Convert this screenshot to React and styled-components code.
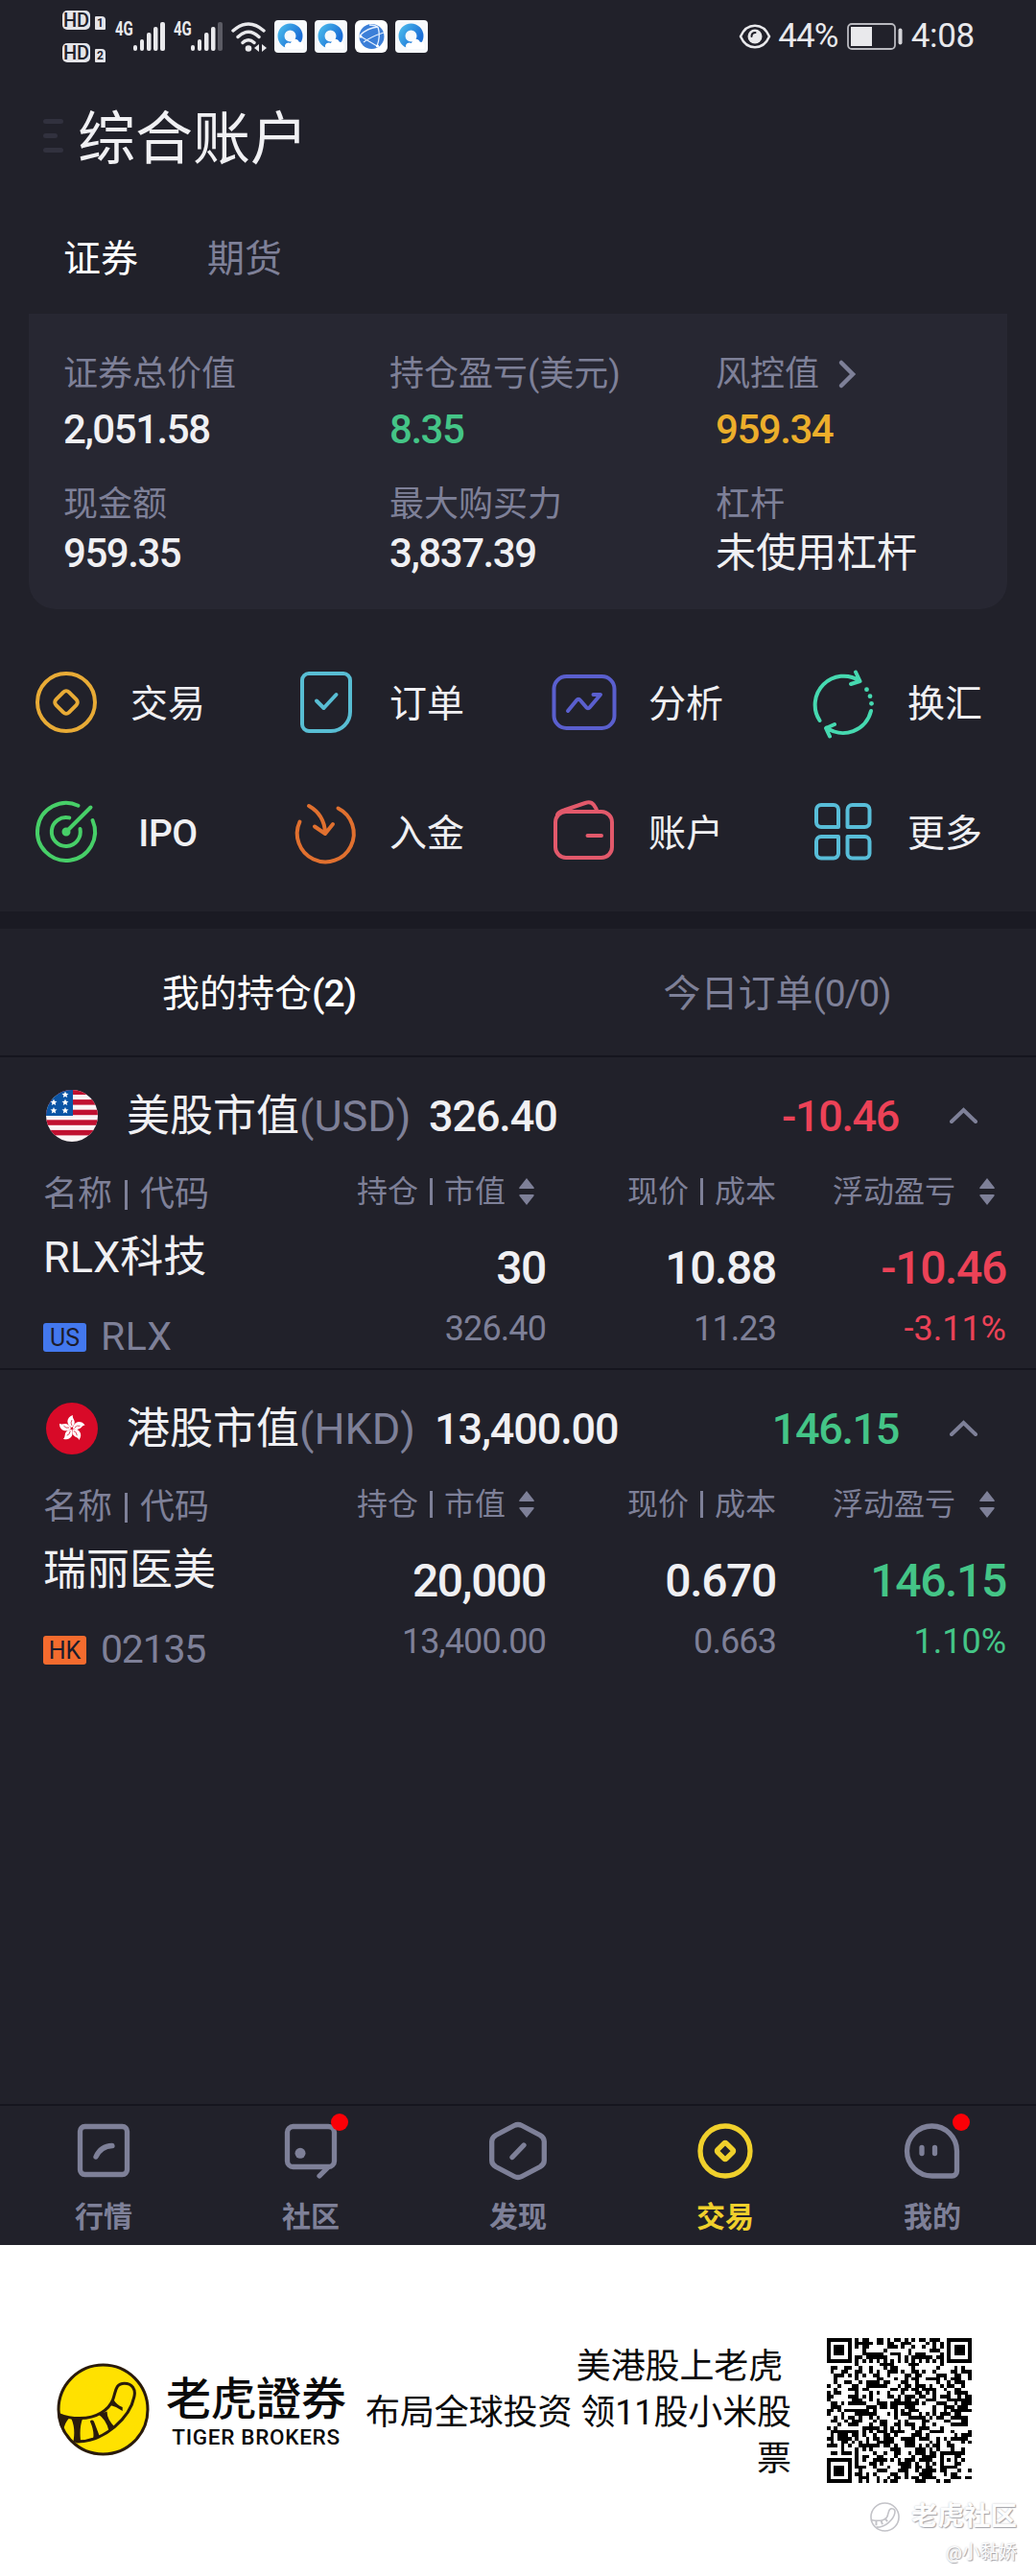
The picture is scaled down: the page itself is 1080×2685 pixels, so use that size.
import styled, { createGlobalStyle } from "styled-components";

const c = {
  bg: "#21212a",
  card: "#272732",
  band: "#1a1a23",
  line: "#15151e",
  text: "#f0f0f3",
  muted: "#7e8098",
  green: "#44c587",
  red: "#ec4257",
  amber: "#ecae2b",
  yellow: "#f0d02c",
};

const GlobalStyle = createGlobalStyle`
  * {
    box-sizing: border-box;
  }

  body {
    margin: 0;
    background: #fff;
    color: ${c.text};
    font-family: Roboto, "Noto Sans CJK SC", sans-serif;
  }

  svg {
    display: block;
    flex: none;
    overflow: visible;
  }
`;

const Screen = styled.div`
  width: 1080px;
  height: 2685px;
  display: flex;
  flex-direction: column;
  overflow: hidden;
  white-space: nowrap;
`;

const AppBody = styled.main`
  height: 2340px;
  display: flex;
  flex-direction: column;
  background: ${c.bg};
`;

/* ---------- status bar ---------- */

const StatusBar = styled.div`
  height: 76px;
  padding: 0 64px 0 65px;
  display: flex;
  align-items: center;
  justify-content: space-between;
  color: #e9e9ec;
`;

const StatusSide = styled.div`
  display: flex;
  align-items: center;
  gap: ${({ $gap }) => $gap}px;
`;

const HdStack = styled.div`
  display: grid;
  gap: 14px;
  margin-right: 2px;
`;

const HdRow = styled.div`
  display: flex;
  align-items: flex-end;
  gap: 5px;
`;

const HdBadge = styled.span`
  width: 29px;
  height: 20px;
  border-radius: 5px;
  background: #e4e4e8;
  color: ${c.bg};
  font: 500 20px/21px Roboto, sans-serif;
  text-align: center;
`;

const SimBadge = styled.span`
  width: 11px;
  height: 14px;
  border-radius: 1px 4px 1px 1px;
  background: #e4e4e8;
  color: ${c.bg};
  font: 700 12px/15px Roboto, sans-serif;
  text-align: center;
`;

const Network = styled.div`
  height: 31px;
  width: ${({ $width }) => $width}px;
  display: flex;
  align-items: flex-start;
  justify-content: space-between;
`;

const NetworkType = styled.span`
  width: 18px;
  font: 700 20px/15px Roboto, sans-serif;
  transform: scaleX(0.75);
  transform-origin: left;
`;

const StatusText = styled.span`
  font-size: 35px;
  line-height: 40px;
  letter-spacing: ${({ $spacing }) => $spacing || 0}px;
`;

/* ---------- header ---------- */

const Header = styled.header`
  height: 134px;
  padding-left: 45px;
  display: flex;
  align-items: center;
`;

const MenuMark = styled.div`
  width: 36px;
  margin-bottom: 4px;
  display: grid;
  gap: 10px;
`;

const MenuLine = styled.i`
  width: ${({ $short }) => ($short ? 15 : 21)}px;
  height: 5px;
  border-radius: 3px;
  background: #31313e;
`;

const Title = styled.h1`
  margin: 5px 0 0;
  font-size: 60px;
  font-weight: 400;
  line-height: 70px;
`;

const AccountTabs = styled.nav`
  height: 117px;
  padding: 2px 66px 0;
  display: flex;
  align-items: center;
  gap: 72px;
`;

const AccountTab = styled.span`
  color: ${({ $active }) => ($active ? "#fff" : c.muted)};
  font-size: 39px;
  line-height: 48px;
`;

const Card = styled.section`
  height: 308px;
  margin: 0 30px;
  padding: 39px 0 0 36px;
  display: grid;
  grid-template-columns: repeat(3, 340px);
  grid-template-rows: 136px 120px;
  border-radius: 0 0 28px 28px;
  background: ${c.card};
`;

const Label = styled.div`
  display: flex;
  align-items: center;
  gap: 20px;
  color: ${c.muted};
  font-size: 36px;
  line-height: 48px;
`;

const Value = styled.div`
  margin-top: ${({ $row }) => ($row ? 3 : 10)}px;
  color: ${({ $color }) => $color || c.text};
  font-size: 42px;
  font-weight: ${({ $cjk }) => ($cjk ? 400 : 500)};
  line-height: 48px;
  letter-spacing: ${({ $cjk }) => ($cjk ? 0 : "-0.035em")};
`;

/* ---------- shortcuts ---------- */

const Shortcuts = styled.section`
  height: 315px;
  padding-top: 29px;
  display: grid;
  grid-template-columns: repeat(4, 270px);
  grid-auto-rows: 135px;
`;

const Shortcut = styled.div`
  padding-left: 33px;
  display: flex;
  align-items: center;
  gap: 31px;
`;

const ShortcutLabel = styled.span`
  min-width: 78px;
  margin-top: 4px;
  font-size: 39px;
  line-height: 48px;
  text-align: center;
  font-weight: ${({ $latin }) => ($latin ? 500 : 400)};
  letter-spacing: ${({ $latin }) => ($latin ? "-0.5px" : 0)};
`;

const Band = styled.div`
  height: 18px;
  background: ${c.band};
`;

const ListTabs = styled.nav`
  height: 134px;
  padding-top: 4px;
  display: grid;
  grid-template-columns: 1fr 1fr;
  align-items: center;
  border-bottom: 2px solid ${c.line};
  font-size: 39px;
  line-height: 48px;
  text-align: center;
`;

const ListTab = styled.span`
  color: ${({ $active }) => ($active ? "#fff" : c.muted)};
`;

const Count = styled.span`
  font-weight: ${({ $bold }) => ($bold ? 500 : 400)};
  letter-spacing: -0.03em;
`;

/* ---------- holdings ---------- */

const Market = styled.section`
  height: 326px;
  border-bottom: ${({ $last }) => ($last ? 0 : 2)}px solid ${c.line};
`;

const MarketHead = styled.div`
  height: 121px;
  padding: 0 61px 0 48px;
  display: flex;
  align-items: center;
  font-size: 45px;
  line-height: 54px;
`;

const MarketName = styled.span`
  margin: 3px 0 0 30px;
`;

const Currency = styled.span`
  width: ${({ $width }) => $width}px;
  margin-top: 3px;
  color: ${c.muted};
`;

const MarketValue = styled.span`
  flex: 1;
  margin-top: 3px;
  font-weight: 500;
  letter-spacing: -0.025em;
`;

const MarketChange = styled.span`
  margin: 3px 53px 0 0;
  color: ${({ $color }) => $color};
  font-weight: 500;
  letter-spacing: -0.03em;
`;

const Columns = styled.div`
  height: 203px;
  padding: 0 31px 0 45px;
  display: grid;
  grid-template-columns: 264px 260px 240px 240px;
`;

const Column = styled.div`
  display: flex;
  flex-direction: column;
  align-items: ${({ $left }) => ($left ? "flex-start" : "flex-end")};
`;

const ColumnHead = styled.div`
  height: 36px;
  margin: ${({ $big }) => ($big ? 4 : 1)}px ${({ $inset }) => $inset || 0}px 0 0;
  display: flex;
  align-items: center;
  color: ${c.muted};
  font-size: ${({ $big }) => ($big ? 36 : 32)}px;
  line-height: 36px;
`;

const Divider = styled.i`
  width: 3px;
  height: ${({ $tall }) => ($tall ? 31 : 28)}px;
  margin: 0 ${({ $tall }) => ($tall ? 13 : 12)}px;
  background: ${c.muted};
`;

const SortIcon = styled.svg`
  margin-left: ${({ $gap }) => $gap}px;
`;

const StockName = styled.div`
  margin-top: 21px;
  font-size: 45px;
  line-height: 54px;
`;

const StockCode = styled.div`
  margin-top: 31px;
  display: flex;
  align-items: center;
  gap: 15px;
  color: ${c.muted};
  font-size: 41px;
  line-height: 48px;
  letter-spacing: ${({ $spacing }) => $spacing}px;
`;

const MarketBadge = styled.span`
  width: 45px;
  height: 30px;
  margin-top: 2px;
  border-radius: 3px;
  background: ${({ $color }) => $color};
  color: #1c1c2c;
  font-size: 25px;
  line-height: 31px;
  letter-spacing: 0;
  text-align: center;
`;

const Primary = styled.div`
  margin-top: 35px;
  color: ${({ $color }) => $color || c.text};
  font-size: 48px;
  font-weight: 500;
  line-height: 54px;
  letter-spacing: -0.028em;
`;

const Secondary = styled.div`
  margin-top: 15px;
  color: ${({ $color }) => $color || c.muted};
  font-size: 36px;
  line-height: 42px;
  letter-spacing: ${({ $color }) => ($color ? 0 : "-0.025em")};
`;

/* ---------- bottom navigation ---------- */

const BottomNav = styled.nav`
  height: 147px;
  margin-top: auto;
  display: grid;
  grid-template-columns: repeat(5, 216px);
  border-top: 2px solid ${c.line};
`;

const NavItem = styled.div`
  display: flex;
  flex-direction: column;
  align-items: center;
  padding-top: 17px;
  color: ${({ $active }) => ($active ? c.yellow : c.muted)};
  font-size: 30px;
  font-weight: 700;
  line-height: 36px;
`;

const NavIcon = styled.div`
  position: relative;
  margin-bottom: 21px;
`;

const Dot = styled.i`
  position: absolute;
  top: -9px;
  right: -9px;
  width: 18px;
  height: 18px;
  border-radius: 50%;
  background: #fb0007;
`;

/* ---------- footer ---------- */

const Footer = styled.footer`
  position: relative;
  height: 345px;
  padding: 97px 67px 0 59px;
  display: flex;
  align-items: flex-start;
  background: #fff;
  color: #0a0a0a;
`;

const Mark = styled.div`
  margin-top: 26px;
`;

const Brand = styled.div`
  width: 188px;
  margin: 33px 0 0 17px;
  display: grid;
  justify-items: center;
`;

const BrandName = styled.div`
  font: 500 47px/54px "Noto Sans CJK TC", sans-serif;
`;

const BrandLatin = styled.div`
  margin-top: 2px;
  font-size: 22.5px;
  font-weight: 500;
  line-height: 28px;
  letter-spacing: 0.7px;
`;

const Slogan = styled.p`
  flex: 1;
  margin: 6px 37px 0 0;
  font-size: 36px;
  line-height: 48px;
  letter-spacing: -0.1px;
  text-align: right;
  white-space: pre;
`;

const Watermark = styled.div`
  position: absolute;
  right: 20px;
  bottom: 12px;
  display: grid;
  justify-items: end;
  color: #fdfdfd;
  text-shadow: 1px 1px 1px #a2a2a8, 0 0 2px #c6c6ca;
`;

const WatermarkTop = styled.div`
  display: flex;
  align-items: center;
  gap: 12px;
  font-size: 27.5px;
  font-weight: 700;
  line-height: 38px;
`;

const WatermarkUser = styled.div`
  margin-top: 7px;
  font-size: 19px;
  line-height: 24px;
`;

/* ---------- icons ---------- */

function Signal({ weak }) {
  return (
    <svg width="33" height="31" fill="#e9e9ec">
      <rect x="0" y="24" width="4" height="6" rx="2" />
      <rect x="7" y="18" width="4" height="12" rx="2" />
      <rect x="14" y="11" width="4.500" height="19" rx="2" />
      <rect x="21" y="5" width="4.500" height="25" rx="2" />
      <rect x="28" y="0" width="5" height="30" rx="2" fill={weak ? "#5b5b64" : undefined} />
    </svg>
  );
}

function Wifi() {
  return (
    <svg width="37" height="31" fill="none" stroke="#e9e9ec" strokeWidth="3.400" strokeLinecap="round">
      <path d="M2 9Q18 -5 34 9M7 15.500Q18 5 29 15.500M12 21.500Q18 16 24 21.500" />
      <circle cx="18" cy="27.500" r="3.300" fill="#e9e9ec" stroke="none" />
      <path d="M29 23v8l-5-4zM32 23l5 4-5 4z" fill="#e9e9ec" stroke="none" />
    </svg>
  );
}

function CloudApp() {
  return (
    <svg width="34" height="34" viewBox="0 0 34 34">
      <defs>
        <linearGradient id="ring" x1="0" y1="0" x2="1" y2="0.6">
          <stop offset="0" stopColor="#46b4ea" />
          <stop offset="1" stopColor="#1b6fd6" />
        </linearGradient>
      </defs>
      <rect width="34" height="34" rx="4" fill="#f6f9fc" />
      <circle cx="16.500" cy="16.500" r="9.500" fill="none" stroke="url(#ring)" strokeWidth="7" />
      <path d="M12 30c-3-4 1-8 5-6 1-5 7-6 9-1 4-1 6 4 4 7z" fill="#fff" />
    </svg>
  );
}

function GlobeApp() {
  return (
    <svg width="34" height="34" viewBox="0 0 34 34">
      <rect width="34" height="34" rx="6" fill="#fff" />
      <circle cx="17.500" cy="17" r="13" fill="#3c7fd8" />
      <g fill="none" stroke="#e5f0ff" strokeWidth="1.300">
        <path d="M5 16Q13 8 24 7M24 7Q27 17 23 27M6 17l17 10M9 23Q17 17 30 13M15 5Q22 5 24 8" />
      </g>
      <circle cx="6" cy="17" r="1.600" fill="#fff" />
      <circle cx="23.500" cy="27" r="1.600" fill="#fff" />
    </svg>
  );
}

function Eye() {
  return (
    <svg width="30" height="26" viewBox="0 0 30 26" fill="none" stroke="#e9e9ec" strokeWidth="2.500">
      <path d="M0 13C6.500 -2 23.500 -2 30 13C23.500 28 6.500 28 0 13z" />
      <circle cx="15" cy="13" r="7.500" fill="#e9e9ec" stroke="none" />
      <path d="M11.500 13q0-4 4-4" stroke={c.bg} strokeWidth="2" strokeLinecap="round" />
    </svg>
  );
}

function Battery() {
  return (
    <svg width="58" height="28" viewBox="0 0 58 28">
      <rect x="1" y="1" width="49" height="26" rx="4" fill="none" stroke="#b9b9bf" strokeWidth="1.800" />
      <rect x="4" y="4" width="22" height="20" fill="#e9e9ec" />
      <rect x="53.500" y="5.500" width="4" height="17" rx="2" fill="#d5d5d9" />
    </svg>
  );
}

const shortcutIcons = {
  trade: (
    <>
      <circle cx="36" cy="36" r="30" />
      <rect x="26.500" y="26.500" width="19" height="19" rx="4" transform="rotate(45 36 36)" />
    </>
  ),
  orders: (
    <>
      <path d="M19 6H55a7 7 0 0 1 7 7V46a20 20 0 0 1-20 20H19a7 7 0 0 1-7-7V13a7 7 0 0 1 7-7z" />
      <path d="M27 34.500l7.500 7.500 13-14" />
    </>
  ),
  analysis: (
    <>
      <rect x="4.500" y="9" width="63" height="54" rx="13" />
      <path d="M19 45l9-11q2-2.500 4 0l6 7q2 2.500 4 0L53 28h-7.500" />
    </>
  ),
  exchange: (
    <>
      <path d="M11.500 55A30 30 0 0 1 53 13.500M49 4.500l4.500 9.500-9.500 3M65 45A30 30 0 0 1 18.500 62.500M27 59l-9 4 4 8.500" />
      <g fill="currentColor" stroke="none">
        <circle cx="60.500" cy="22.700" r="2.400" />
        <circle cx="64" cy="29.700" r="2.400" />
        <circle cx="65.500" cy="37.300" r="2.400" />
      </g>
    </>
  ),
  ipo: (
    <>
      <path d="M63.500 24A30 30 0 1 1 48.500 8.700M50.500 33A15 15 0 1 1 39.300 21.400M36 36L61.500 10.500" />
      <circle cx="36" cy="36" r="2.500" fill="currentColor" />
    </>
  ),
  deposit: (
    <>
      <path d="M49.500 11.500A29.500 29.500 0 1 1 9.500 25.500" />
      <path d="M19 9Q35 18 36 37M25 30.500l11 7.500 8-10" />
    </>
  ),
  wallet: (
    <>
      <rect x="6" y="15" width="59" height="48" rx="11" />
      <path d="M8 18q2-3 7-4.500L37 6q6-2 9 2 3 4 3.500 7M39.500 40H54" />
    </>
  ),
  more: (
    <>
      <path d="M13 8H26a5 5 0 0 1 5 5V31H13a5 5 0 0 1-5-5V13a5 5 0 0 1 5-5z" />
      <path d="M45.500 8H58.500a5 5 0 0 1 5 5V26a5 5 0 0 1-5 5H40.500V13a5 5 0 0 1 5-5z" />
      <path d="M13 41H31V58.500a5 5 0 0 1-5 5H13a5 5 0 0 1-5-5V46a5 5 0 0 1 5-5z" />
      <path d="M40.500 41H58.500a5 5 0 0 1 5 5V58.500a5 5 0 0 1-5 5H45.500a5 5 0 0 1-5-5z" />
    </>
  ),
};

const navIcons = {
  quotes: (
    <>
      <rect x="5.500" y="4.500" width="49" height="50" rx="5" />
      <path d="M22 36Q27 25 39 24.500" />
    </>
  ),
  community: (
    <>
      <rect x="5.500" y="4.500" width="49" height="42" rx="6" />
      <path d="M47 48l-8 8" />
      <circle cx="19" cy="32.300" r="5.500" fill="currentColor" stroke="none" />
    </>
  ),
  discover: (
    <>
      <path d="M26 3.500Q30 1.500 34 3.500L53 13.500Q57.300 16 57.300 20V40Q57.300 44 53 46.500L34 56.500Q30 58.500 26 56.500L7 46.500Q2.700 44 2.700 40V20Q2.700 16 7 13.500z" />
      <path d="M24 36.500L36 24" />
    </>
  ),
  trade: (
    <>
      <circle cx="30" cy="30" r="26" />
      <rect x="23.500" y="23.500" width="13" height="13" rx="1.500" transform="rotate(45 30 30)" />
    </>
  ),
  mine: (
    <>
      <path d="M29.500 4A26 26 0 0 1 55.500 30V51a5 5 0 0 1-5 5H29.500A26 26 0 0 1 29.500 4z" />
      <path d="M19 26.500v6M32.500 26.500v6" />
    </>
  ),
};

function UsFlag() {
  return (
    <svg width="54" height="54" viewBox="0 0 54 54">
      <clipPath id="us">
        <circle cx="27" cy="27" r="27" />
      </clipPath>
      <g clipPath="url(#us)">
        <rect width="54" height="54" fill="#fbf3f5" />
        {[0, 1, 2, 3, 4].map((i) => (
          <rect key={i} y={i * 10.6 - 0.5} width="54" height="5.500" fill="#c01030" />
        ))}
        <rect width="28" height="27" fill="#0b55a5" />
        <g fill="#fff">
          {[[20, 5], [8, 13], [20, 13], [8, 21.5], [20, 21.5]].map(([x, y]) => (
            <path
              key={`${x}-${y}`}
              transform={`translate(${x} ${y})`}
              d="M0-3.500l1 2.300 2.500.2-1.900 1.600.6 2.500L0 1.800l-2.200 1.300.6-2.500L-3.500-1l2.500-.2z"
            />
          ))}
        </g>
      </g>
    </svg>
  );
}

function HkFlag() {
  return (
    <svg width="54" height="54" viewBox="0 0 54 54">
      <circle cx="27" cy="27" r="27" fill="#d80a28" />
      {[0, 72, 144, 216, 288].map((a) => (
        <g key={a} transform={`rotate(${a} 27 27)`}>
          <path d="M27 26C20.500 23 21 15 28 13C26.500 17 33.500 19 27 26z" fill="#fff" />
          <path d="M27 24q-2-3 0-6" fill="none" stroke="#d80a28" strokeWidth="0.700" />
        </g>
      ))}
    </svg>
  );
}

function Chevron() {
  return (
    <svg width="29" height="16" fill="none" stroke={c.muted} strokeWidth="4" strokeLinecap="round">
      <path d="M2 14L14.500 2L27 14" />
    </svg>
  );
}

function Sort({ gap }) {
  return (
    <SortIcon $gap={gap} width="16" height="28" fill={c.muted}>
      <path d="M8 0l7.500 9.500q1 1.500-1 1.500h-13q-2 0-1-1.500zM8 28l7.500-9.500q1-1.500-1-1.500h-13q-2 0-1 1.500z" />
    </SortIcon>
  );
}

function TigerMark() {
  return (
    <svg width="97" height="97" viewBox="0 0 96 96">
      <circle cx="48" cy="48" r="46" fill="#ffe100" stroke="#2a1b0c" strokeWidth="3" />
      <path
        d="M2.500 53Q12 57 24 57C42 57 54 48 58 38C61 31 60 21 70 21C78 21 82 27 80 35C76 55 50 82 20 81"
        fill="none"
        stroke="#2a1b0c"
        strokeWidth="3"
      />
      <path
        d="M2 52l11 5q-5 5-6 13zM15 57h12q-4 10-2 25h-8q3-14-2-25zM34.500 60q2-2 4 0l6 16-7 3q2-8-3-19zM43 53l9-3q0 8 8 16l-6 4q-3-12-11-17zM54 43l5-5q3 5 9 7.500l0 4q-7-5-14-6.500z"
        fill="#2a1b0c"
      />
    </svg>
  );
}

function FaintMark() {
  return (
    <svg width="31" height="31" viewBox="0 0 96 96" fill="none" stroke="#c3c3c8">
      <circle cx="48" cy="48" r="45" strokeWidth="5" />
      <path d="M6 58Q54 66 58 38C61 31 60 21 70 21C78 21 82 27 80 35C76 55 50 82 20 81" strokeWidth="5" />
      <path d="M20 61v14M36 60l4 12M48 52l8 10" strokeWidth="6" />
    </svg>
  );
}

const QR_SIZE = 41;

function inFinder(x, y) {
  const edge = QR_SIZE - 8;
  return (x < 8 && y < 8) || (x >= edge && y < 8) || (x < 8 && y >= edge);
}

function qrPath() {
  let seed = 20210;
  let d = "";
  for (let y = 0; y < QR_SIZE; y++) {
    for (let x = 0; x < QR_SIZE; x++) {
      seed = (seed * 1103515245 + 12345) % 2147483648;
      let on = seed / 2147483648 < 0.5;
      if (x === 6) on = y % 2 === 0;
      if (y === 6) on = x % 2 === 0;
      const ring = Math.max(Math.abs(x - 34), Math.abs(y - 34));
      if (ring <= 2) on = ring !== 1;
      if (on && !inFinder(x, y)) d += `M${x} ${y}h1v1h-1z`;
    }
  }
  return d;
}

function QrCode() {
  return (
    <svg width="151" height="151" viewBox="0 0 41 41" shapeRendering="crispEdges" fill="#000">
      <path d={qrPath()} />
      {[[0, 0], [34, 0], [0, 34]].map(([x, y]) => (
        <path
          key={`${x}-${y}`}
          transform={`translate(${x} ${y})`}
          fillRule="evenodd"
          d="M0 0h7v7h-7zM1 1v5h5v-5zM2 2h3v3h-3z"
        />
      ))}
    </svg>
  );
}

/* ---------- data ---------- */

const stats = [
  { label: "证券总价值", value: "2,051.58" },
  { label: "持仓盈亏(美元)", value: "8.35", color: c.green },
  { label: "风控值", value: "959.34", color: c.amber, more: true },
  { label: "现金额", value: "959.35" },
  { label: "最大购买力", value: "3,837.39" },
  { label: "杠杆", value: "未使用杠杆", cjk: true },
];

const shortcuts = [
  { icon: "trade", label: "交易", color: "#e8ab36" },
  { icon: "orders", label: "订单", color: "#58bdd3" },
  { icon: "analysis", label: "分析", color: "#5a5fce" },
  { icon: "exchange", label: "换汇", color: "#46d9b0" },
  { icon: "ipo", label: "IPO", color: "#47cf68", latin: true },
  { icon: "deposit", label: "入金", color: "#e0702f" },
  { icon: "wallet", label: "账户", color: "#e2596b" },
  { icon: "more", label: "更多", color: "#58bdd8" },
];

const markets = [
  {
    flag: <UsFlag />,
    name: "美股市值",
    currency: "(USD)",
    currencyWidth: 135,
    value: "326.40",
    change: "-10.46",
    color: c.red,
    stock: "RLX科技",
    badge: "US",
    badgeColor: "#4378ee",
    code: "RLX",
    codeSpacing: 0.5,
    amount: "30",
    total: "326.40",
    price: "10.88",
    cost: "11.23",
    percent: "-3.11%",
  },
  {
    flag: <HkFlag />,
    name: "港股市值",
    currency: "(HKD)",
    currencyWidth: 141,
    value: "13,400.00",
    change: "146.15",
    color: c.green,
    stock: "瑞丽医美",
    badge: "HK",
    badgeColor: "#f46b2e",
    code: "02135",
    codeSpacing: -1.2,
    amount: "20,000",
    total: "13,400.00",
    price: "0.670",
    cost: "0.663",
    percent: "1.10%",
  },
];

const navItems = [
  { icon: "quotes", label: "行情" },
  { icon: "community", label: "社区", dot: true },
  { icon: "discover", label: "发现" },
  { icon: "trade", label: "交易", active: true },
  { icon: "mine", label: "我的", dot: true },
];

function MarketGroup({ m, last }) {
  return (
    <Market $last={last}>
      <MarketHead>
        {m.flag}
        <MarketName>{m.name}</MarketName>
        <Currency $width={m.currencyWidth}>{m.currency}</Currency>
        <MarketValue>{m.value}</MarketValue>
        <MarketChange $color={m.color}>{m.change}</MarketChange>
        <Chevron />
      </MarketHead>
      <Columns>
        <Column $left>
          <ColumnHead $big>
            名称
            <Divider $tall />
            代码
          </ColumnHead>
          <StockName>{m.stock}</StockName>
          <StockCode $spacing={m.codeSpacing}>
            <MarketBadge $color={m.badgeColor}>{m.badge}</MarketBadge>
            {m.code}
          </StockCode>
        </Column>
        <Column>
          <ColumnHead $inset={12}>
            持仓
            <Divider />
            市值
            <Sort gap={14} />
          </ColumnHead>
          <Primary>{m.amount}</Primary>
          <Secondary>{m.total}</Secondary>
        </Column>
        <Column>
          <ColumnHead>
            现价
            <Divider />
            成本
          </ColumnHead>
          <Primary>{m.price}</Primary>
          <Secondary>{m.cost}</Secondary>
        </Column>
        <Column>
          <ColumnHead $inset={12}>
            浮动盈亏
            <Sort gap={25} />
          </ColumnHead>
          <Primary $color={m.color}>{m.change}</Primary>
          <Secondary $color={m.color}>{m.percent}</Secondary>
        </Column>
      </Columns>
    </Market>
  );
}

export default function App() {
  return (
    <Screen>
      <GlobalStyle />
      <AppBody>
        <StatusBar>
          <StatusSide $gap={8}>
            <HdStack>
              {[1, 2].map((n) => (
                <HdRow key={n}>
                  <HdBadge>HD</HdBadge>
                  <SimBadge>{n}</SimBadge>
                </HdRow>
              ))}
            </HdStack>
            <StatusSide $gap={9}>
              <Network $width={52}>
                <NetworkType>4G</NetworkType>
                <Signal />
              </Network>
              <Network $width={51}>
                <NetworkType>4G</NetworkType>
                <Signal weak />
              </Network>
              <Wifi />
            </StatusSide>
            <CloudApp />
            <CloudApp />
            <GlobeApp />
            <CloudApp />
          </StatusSide>
          <StatusSide $gap={9}>
            <Eye />
            <StatusText $spacing={-0.8}>44%</StatusText>
            <Battery />
            <StatusText $spacing={-0.3}>4:08</StatusText>
          </StatusSide>
        </StatusBar>

        <Header>
          <MenuMark>
            <MenuLine />
            <MenuLine $short />
            <MenuLine />
          </MenuMark>
          <Title>综合账户</Title>
        </Header>

        <AccountTabs>
          <AccountTab $active>证券</AccountTab>
          <AccountTab>期货</AccountTab>
        </AccountTabs>

        <Card>
          {stats.map((s, i) => (
            <div key={s.label}>
              <Label>
                {s.label}
                {s.more && (
                  <svg width="18" height="28" fill="none" stroke={c.muted} strokeWidth="4.500" strokeLinecap="round">
                    <path d="M3 2L15 14L3 26" />
                  </svg>
                )}
              </Label>
              <Value $row={i > 2} $color={s.color} $cjk={s.cjk}>
                {s.value}
              </Value>
            </div>
          ))}
        </Card>

        <Shortcuts>
          {shortcuts.map((s) => (
            <Shortcut key={s.icon}>
              <svg
                width="72"
                height="72"
                fill="none"
                color={s.color}
                stroke="currentColor"
                strokeWidth="4"
                strokeLinecap="round"
                strokeLinejoin="round"
              >
                {shortcutIcons[s.icon]}
              </svg>
              <ShortcutLabel $latin={s.latin}>{s.label}</ShortcutLabel>
            </Shortcut>
          ))}
        </Shortcuts>

        <Band />

        <ListTabs>
          <ListTab $active>
            我的持仓<Count $bold>(2)</Count>
          </ListTab>
          <ListTab>
            今日订单<Count>(0/0)</Count>
          </ListTab>
        </ListTabs>

        {markets.map((m, i) => (
          <MarketGroup key={m.code} m={m} last={i === markets.length - 1} />
        ))}

        <BottomNav>
          {navItems.map((n) => (
            <NavItem key={n.icon} $active={n.active}>
              <NavIcon>
                <svg
                  width="60"
                  height="60"
                  fill="none"
                  stroke="currentColor"
                  strokeWidth="5.300"
                  strokeLinecap="round"
                  strokeLinejoin="round"
                >
                  {navIcons[n.icon]}
                </svg>
                {n.dot && <Dot />}
              </NavIcon>
              {n.label}
            </NavItem>
          ))}
        </BottomNav>
      </AppBody>

      <Footer>
        <Mark>
          <TigerMark />
        </Mark>
        <Brand>
          <BrandName>老虎證券</BrandName>
          <BrandLatin>TIGER BROKERS</BrandLatin>
        </Brand>
        <Slogan>{"美港股上老虎\u00a0\n布局全球投资 领11股小米股\n票"}</Slogan>
        <QrCode />
        <Watermark>
          <WatermarkTop>
            <FaintMark />
            老虎社区
          </WatermarkTop>
          <WatermarkUser>@小黏娇</WatermarkUser>
        </Watermark>
      </Footer>
    </Screen>
  );
}
